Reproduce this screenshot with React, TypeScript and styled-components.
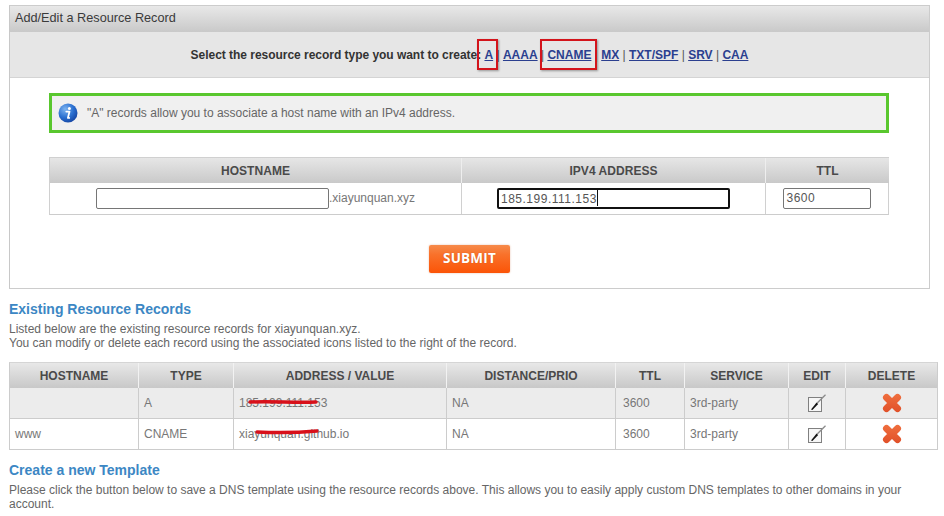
import React from "react";
import styled, { createGlobalStyle } from "styled-components";

const Global = createGlobalStyle`
  html, body { margin: 0; padding: 0; background: #fff; }
  body { width: 944px; height: 516px; overflow: hidden; font-family: "Liberation Sans", Arial, sans-serif; color: #666; font-size: 12px; }
`;
const Page = styled.div`
  padding: 5px 6px 0 9px; width: 944px; height: 516px; box-sizing: border-box; overflow: hidden;
`;
const Panel = styled.section`
  width: 921px; height: 284px; box-sizing: border-box; border: 1px solid #ccc; border-left-color:#c8c8c8;
`;
const PanelHead = styled.div`
  height: 26px; padding-left: 5px; line-height: 24px; font-size: 12.7px; color: #3a3a3a;
  background: linear-gradient(#e8e8e8, #c9c9c9);
`;
const TypeBar = styled.div`
  height: 46px; box-sizing: border-box; border-bottom: 1px solid #d4d4d4; background: #e6e6e6;
  display: flex; justify-content: center; align-items: center; font-size: 12px; color: #333; font-weight: bold; padding: 0; white-space: pre;
`;
const TypeLabel = styled.span` letter-spacing: -.03px; `;
const TypeLink = styled.a`
  position: relative; color: #2b3f8f; text-decoration: underline;
`;
const Sep = styled.span` color:#555; font-weight: normal; `;
const RedBox = styled.span<{ $l: number; $r: number }>`
  position: absolute; left: ${p => p.$l}px; right: ${p => p.$r}px; top: -9px; bottom: -8px; border: 2.5px solid #d3141b;
  box-shadow: 1px 1px 2px rgba(0,0,0,.35);
`;
const Body = styled.div` padding: 15px 40px 0 39px; `;
const Notice = styled.div`
  height: 40px; box-sizing: border-box; border: 3px solid #59c72e; background: #f0f0f0; display: flex; align-items: center; gap: 9px;
  padding-left: 6px; font-size: 12px; color: #666;
`;
const FormTable = styled.div`
  margin-top: 24px; display: grid; grid-template-columns: 412px 304px 123px; border: 1px solid #d0d0d0; border-bottom-color:#ccc; height: 58px; box-sizing: border-box;
`;
const HeadCell = styled.div<{ $last?: boolean }>`
  height: 25px; display: flex; align-items: center; justify-content: center; font-size: 12px; font-weight: bold; color: #4a4a4a; letter-spacing: .05px;
  background: linear-gradient(#e6e6e6, #c9c9c9); border-right: ${p => p.$last ? "none" : "1px solid #eee"}; 
`;
const InputCell = styled.div<{ $last?: boolean }>`
  display: flex; justify-content: center; align-items: center; font-size: 12px; color: #777; border-right: ${p => p.$last ? "none" : "1px solid #d0d0d0"}; height: 31px; padding-bottom: 1px; box-sizing: border-box;
`;
const TextInput = styled.div<{ $w: number; $focus?: boolean; $shift?: number }>`
  width: ${p => p.$w}px; height: 21px; box-sizing: border-box; background: #fff; border: ${p => p.$focus ? "2px solid #111" : "1px solid #767676"}; border-radius: 2px;
  font-size: 12px; letter-spacing: .5px; color: #555; padding-left: ${p => p.$focus ? "2px" : "3px"}; line-height: ${p => p.$focus ? "17px" : "19px"};
  margin-right: ${p => p.$shift ?? 0}px;
`;
const Caret = styled.span` display: inline-block; width: 1px; height: 16px; background: #111; vertical-align: -3px; `;
const SubmitRow = styled.div` display: flex; justify-content: center; margin-top: 30px; padding-left: 1px; `;
const Submit = styled.button`
  width: 81px; height: 28px; padding: 0 0 2px; border: none; border-radius: 2px; color: #fff; font-family: "Open Sans", sans-serif; font-size: 13.5px; font-weight: 700; letter-spacing: .2px;
  text-shadow: 0 0 1px rgba(160,60,0,.5);
  background: linear-gradient(#f68a4a 0%, #f9712a 35%, #fb5407 100%); box-shadow: 0 0 2px rgba(200,100,50,.45);
`;
const H2 = styled.h2<{ $top: number }>`
  margin: ${p => p.$top}px 0 0; font-size: 14px; line-height: 16px; color: #3c87c4; font-weight: bold;
`;
const Para = styled.p`
  margin: 5px 0 0; font-size: 12px; line-height: 14px; color: #666;
`;
const Records = styled.div`
  margin-top: 12px; width: 929px; box-sizing: border-box; border: 1px solid #ccc; border-top-color: #d5d5d5;
  display: grid; grid-template-columns: 129px 95px 213px 169px 69px 104px 57px 91px;
`;
const RHead = styled.div<{ $last?: boolean }>`
  height: 25px; box-sizing: border-box; display: flex; align-items: center; justify-content: center; font-size: 12px; font-weight: bold; color: #4a4a4a; letter-spacing: 0;
  background: linear-gradient(#e8e8e8, #c8c8c8); border-right: ${p => p.$last ? "none" : "1px solid #f2f2f2"};
`;
const RCell = styled.div<{ $alt?: boolean; $last?: boolean; $center?: boolean; $end?: boolean; $pad?: number }>`
  height: ${p => p.$end ? 30 : 31}px; box-sizing: border-box; display: flex; align-items: center; justify-content: ${p => p.$center ? "center" : "flex-start"};
  padding-left: ${p => p.$center ? 0 : p.$pad ?? 5}px; font-size: 12px; color: #777; position: relative; white-space: pre;
  background: ${p => p.$alt ? "#ececec" : "#fff"}; border-right: ${p => p.$last ? "none" : "1px solid #ccc"}; border-bottom: ${p => p.$end ? "none" : "1px solid #ccc"};
`;
const Scribble = styled.svg`
  position: absolute; left: 0; top: 0; pointer-events: none; overflow: visible; filter: blur(.4px);
`;

const InfoIcon = () => (
  <svg width="20" height="20" viewBox="0 0 20 20" aria-hidden="true">
    <defs>
      <radialGradient id="ig" cx="35%" cy="30%" r="80%">
        <stop offset="0" stopColor="#7db4f0" />
        <stop offset=".55" stopColor="#2a6fd0" />
        <stop offset="1" stopColor="#123f9c" />
      </radialGradient>
    </defs>
    <circle cx="10" cy="10" r="9.5" fill="url(#ig)" />
    <circle cx="11.4" cy="5.4" r="1.5" fill="#fff" />
    <path d="M8.3 8.6h3.2l-1.6 6.3h1.3" fill="none" stroke="#fff" strokeWidth="1.8" strokeLinecap="round" strokeLinejoin="round" />
  </svg>
);
const EditIcon = () => (
  <svg width="19" height="19" viewBox="0 0 19 19" aria-hidden="true">
    <rect x="0.5" y="3.5" width="13" height="14" fill="#f6f6f6" stroke="#808080" />
    <path d="M3 15.5 L8.6 8.6 L10.2 10 L4.4 16 Z" fill="#111" />
    <path d="M9.2 9 L17.5 0.8" stroke="#8a8a8a" strokeWidth="1.3" fill="none" />
  </svg>
);
const DeleteIcon = () => (
  <svg width="20" height="20" viewBox="0 0 20 20" aria-hidden="true">
    <defs>
      <linearGradient id="dg" gradientUnits="userSpaceOnUse" x1="0" y1="0" x2="0" y2="20">
        <stop offset="0" stopColor="#f0703f" />
        <stop offset="1" stopColor="#e04f28" />
      </linearGradient>
    </defs>
    <path d="M4.5 4.5 L15.5 15.5 M15.5 4.5 L4.5 15.5" stroke="url(#dg)" strokeWidth="7" strokeLinecap="round" fill="none" />
  </svg>
);

const headers = ["HOSTNAME", "TYPE", "ADDRESS / VALUE", "DISTANCE/PRIO", "TTL", "SERVICE", "EDIT", "DELETE"];
const rows = [
  { host: "", type: "A", value: "185.199.111.153", scribble: "M16 14 C40 13 60 15 82 14", alt: true },
  { host: "www", type: "CNAME", value: "xiayunquan.github.io", scribble: "M23 13 C45 14 60 14 83 12", alt: false },
];

export default function App() {
  return (
    <Page>
      <Global />
      <Panel>
        <PanelHead>Add/Edit a Resource Record</PanelHead>
        <TypeBar>
          <TypeLabel>Select the resource record type you want to create: </TypeLabel>
          <TypeLink>A<RedBox $l={-7} $r={-5} /></TypeLink>
          <Sep> | </Sep><TypeLink>AAAA</TypeLink><Sep> | </Sep>
          <TypeLink>CNAME<RedBox $l={-7} $r={-6} /></TypeLink>
          <Sep> | </Sep><TypeLink>MX</TypeLink><Sep> | </Sep><TypeLink>TXT/SPF</TypeLink><Sep> | </Sep><TypeLink>SRV</TypeLink><Sep> | </Sep><TypeLink>CAA</TypeLink>
        </TypeBar>
        <Body>
          <Notice><InfoIcon />"A" records allow you to associate a host name with an IPv4 address.</Notice>
          <FormTable>
            <HeadCell>HOSTNAME</HeadCell>
            <HeadCell>IPV4 ADDRESS</HeadCell>
            <HeadCell $last>TTL</HeadCell>
            <InputCell><TextInput $w={233} />.xiayunquan.xyz</InputCell>
            <InputCell><TextInput $w={233} $focus>185.199.111.153<Caret /></TextInput></InputCell>
            <InputCell $last><TextInput $w={88} $shift={2}>3600</TextInput></InputCell>
          </FormTable>
          <SubmitRow><Submit>SUBMIT</Submit></SubmitRow>
        </Body>
      </Panel>
      <H2 $top={12}>Existing Resource Records</H2>
      <Para>Listed below are the existing resource records for xiayunquan.xyz.<br />You can modify or delete each record using the associated icons listed to the right of the record.</Para>
      <Records>
        {headers.map((h, i) => <RHead key={h} $last={i === headers.length - 1}>{h}</RHead>)}
        {rows.map((r, idx) => {
          const end = idx === rows.length - 1;
          return (
            <React.Fragment key={r.type}>
              <RCell $alt={r.alt} $end={end}>{r.host}</RCell>
              <RCell $alt={r.alt} $end={end}>{r.type}</RCell>
              <RCell $alt={r.alt} $end={end}>
                {r.value}
                <Scribble width="100" height="28"><path d={r.scribble} stroke="#d8101a" strokeWidth="3.4" strokeLinecap="round" fill="none" /></Scribble>
              </RCell>
              <RCell $alt={r.alt} $end={end}>NA</RCell>
              <RCell $alt={r.alt} $end={end} $pad={7}>3600</RCell>
              <RCell $alt={r.alt} $end={end}>3rd-party</RCell>
              <RCell $alt={r.alt} $end={end} $center><EditIcon /></RCell>
              <RCell $alt={r.alt} $end={end} $center $last><DeleteIcon /></RCell>
            </React.Fragment>
          );
        })}
      </Records>
      <H2 $top={12}>Create a new Template</H2>
      <Para>Please click the button below to save a DNS template using the resource records above. This allows you to easily apply custom DNS templates to other domains in your account.</Para>
    </Page>
  );
}
